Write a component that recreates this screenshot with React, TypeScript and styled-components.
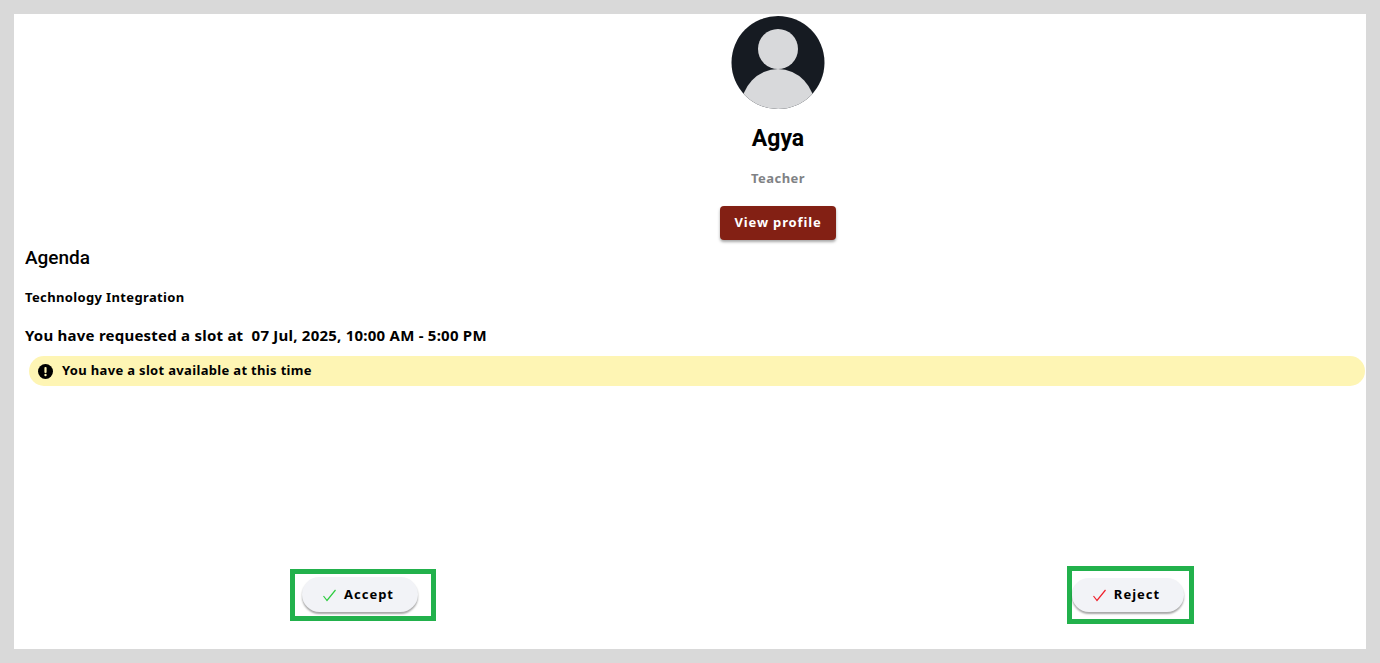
import React from "react";
import styled, { createGlobalStyle } from "styled-components";

const GlobalStyle = createGlobalStyle`
  html, body {
    margin: 0;
    padding: 0;
    height: 100%;
    background: #d9d9d9;
    font-family: "Noto Sans", "Liberation Sans", sans-serif;
    color: #000;
  }
`;

const Page = styled.div`
  box-sizing: border-box;
  width: 1380px;
  height: 663px;
  padding: 14px;
  overflow: hidden;
`;

const Panel = styled.main`
  box-sizing: border-box;
  height: 635px;
  padding-top: 2px;
  background: #fff;
  display: flex;
  flex-direction: column;
`;

const Profile = styled.section`
  margin-left: 176px;
  display: flex;
  flex-direction: column;
  align-items: center;
`;

const Avatar = styled.svg`
  display: block;
  width: 94px;
  height: 94px;
`;

const Name = styled.h2`
  margin: 14px 0 0;
  height: 29px;
  font: 700 23px/30px Roboto, sans-serif;
`;

const Role = styled.div`
  margin-top: 16px;
  font-size: 13px;
  line-height: 18px;
  font-weight: 700;
  letter-spacing: 0.45px;
  color: #808285;
`;

const ProfileButton = styled.button`
  margin-top: 19px;
  width: 116px;
  height: 34px;
  padding: 0 0 2px;
  border: 0;
  border-radius: 4px;
  background: #832014;
  color: #fff;
  font: 700 13px/18px "Noto Sans", sans-serif;
  letter-spacing: 0.85px;
  box-shadow: 0 2px 3px rgba(0, 0, 0, 0.35);
`;

const Details = styled.section`
  padding-left: 11px;
`;

const AgendaTitle = styled.h3`
  margin: 6px 0 0;
  font: 500 19px/24px Roboto, sans-serif;
`;

const Topic = styled.div`
  margin-top: 18px;
  font-size: 13px;
  line-height: 18px;
  font-weight: 700;
  letter-spacing: 0.36px;
`;

const SlotLine = styled.div`
  margin-top: 18px;
  font-size: 15px;
  line-height: 22px;
  font-weight: 700;
  letter-spacing: 0.23px;
  white-space: pre;
`;

const Notice = styled.div`
  box-sizing: border-box;
  margin: 10px 1px 0 4px;
  height: 30px;
  padding: 0 0 2px 9px;
  display: flex;
  align-items: center;
  gap: 9px;
  border-radius: 15px;
  background: #fef5b4;
  font-size: 13px;
  font-weight: 700;
  letter-spacing: 0.33px;
`;

const NoticeIcon = styled.svg`
  width: 15px;
  height: 15px;
  margin-top: 2px;
`;

const Actions = styled.footer`
  margin-top: 180px;
  padding-left: 276px;
  display: flex;
  align-items: center;
  gap: 631px;
`;

const Highlight = styled.div<{ $pad: string }>`
  box-sizing: border-box;
  padding: ${({ $pad }) => $pad};
  border: 5px solid #22b14c;
`;

const ActionButton = styled.button<{ $width: number; $height: number }>`
  box-sizing: border-box;
  width: ${({ $width }) => $width}px;
  height: ${({ $height }) => $height}px;
  padding: 0 4px 2px 0;
  display: flex;
  align-items: center;
  justify-content: center;
  gap: 8px;
  border: 0;
  border-radius: 18px;
  background: #f2f3f7;
  color: #000;
  font: 700 13px/18px "Noto Sans", sans-serif;
  letter-spacing: 1px;
  box-shadow: 0 2px 2px rgba(0, 0, 0, 0.35);
`;

const Check = styled.svg<{ $color: string }>`
  width: 14px;
  height: 14px;
  margin-top: 2px;
  fill: none;
  stroke: ${({ $color }) => $color};
  stroke-width: 1.2;
`;

const CheckIcon = ({ color }: { color: string }) => (
  <Check $color={color} viewBox="0 0 14 14">
    <path d="M1.5 8l3.5 4.5L13.5 2" />
  </Check>
);

const App: React.FC = () => {
  return (
    <Page>
      <GlobalStyle />
      <Panel>
        <Profile>
          <Avatar viewBox="0 0 94 94">
            <defs>
              <clipPath id="avatar-clip">
                <circle cx="47" cy="46.5" r="46.5" />
              </clipPath>
            </defs>
            <circle cx="47" cy="46.5" r="46.5" fill="#161b22" />
            <g clipPath="url(#avatar-clip)" fill="#d8d9db">
              <circle cx="47" cy="33" r="20" />
              <ellipse cx="47" cy="92" rx="37" ry="39" />
            </g>
          </Avatar>
          <Name>Agya</Name>
          <Role>Teacher</Role>
          <ProfileButton>View profile</ProfileButton>
        </Profile>
        <Details>
          <AgendaTitle>Agenda</AgendaTitle>
          <Topic>Technology Integration</Topic>
          <SlotLine>You have requested a slot at  07 Jul, 2025, 10:00 AM - 5:00 PM</SlotLine>
          <Notice>
            <NoticeIcon viewBox="0 0 15 15">
              <circle cx="7.5" cy="7.5" r="7.5" fill="#000" />
              <rect x="6.4" y="3" width="2.2" height="6" rx="1" fill="#fef5b4" />
              <circle cx="7.5" cy="11" r="1.2" fill="#fef5b4" />
            </NoticeIcon>
            You have a slot available at this time
          </Notice>
        </Details>
        <Actions>
          <Highlight $pad="3px 13px 4px 7px">
            <ActionButton $width={116} $height={35}>
              <CheckIcon color="#2ecc40" />
              Accept
            </ActionButton>
          </Highlight>
          <Highlight $pad="7px 5px 7px 0">
            <ActionButton $width={112} $height={34}>
              <CheckIcon color="#f0202c" />
              Reject
            </ActionButton>
          </Highlight>
        </Actions>
      </Panel>
    </Page>
  );
};

export default App;
